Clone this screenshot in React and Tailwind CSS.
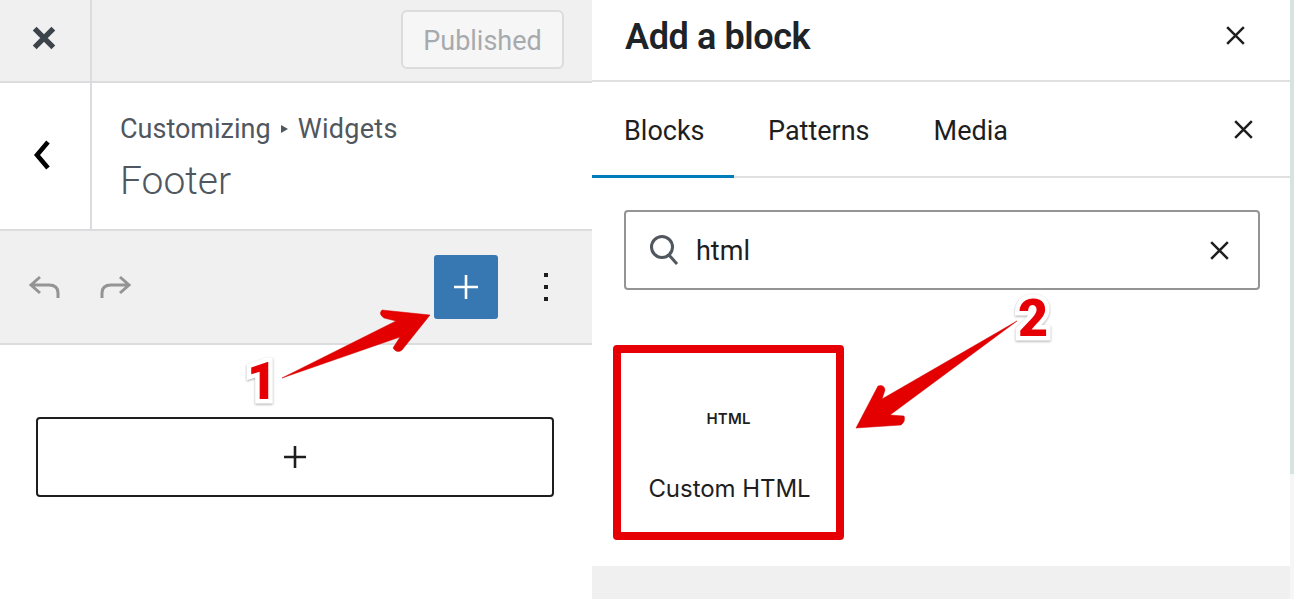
import React from 'react';

const XIcon = ({ className, width = 2.4 }) => (
  <svg className={className} viewBox="0 0 24 24" fill="none" stroke="currentColor" strokeWidth={width}>
    <path d="M4 4l16 16M20 4L4 20" />
  </svg>
);

// left column: customizer sidebar
const Sidebar = () => (
  <div className="w-[592px] shrink-0 flex flex-col h-full bg-white">
    <div className="h-[83px] flex bg-[#f0f0f1] border-b-2 border-[#dcdcde]">
      <div className="w-[92px] flex items-center justify-center border-r-2 border-[#dcdcde] text-[#3c434a]">
        <XIcon className="w-[28px] h-[28px] mr-[3px] mt-[-6px]" width={4.6} />
      </div>
      <div className="flex-1 flex justify-end pr-[28px] pt-[10px]">
        <div className="w-[163px] h-[59px] flex items-center justify-center rounded-[6px] border-2 border-[#dcdcde] bg-[#f6f6f6] text-[27px] text-[#a7aaad] pt-[3px]">
          Published
        </div>
      </div>
    </div>
    <div className="h-[148px] flex border-b-2 border-[#dcdcde]">
      <div className="w-[92px] flex items-center justify-center border-r-2 border-[#dcdcde]">
        <svg className="w-[18px] h-[30px] mr-[7px] mt-[-2px]" viewBox="0 0 18 30" fill="none" stroke="#000" strokeWidth="4.6">
          <path d="M15 2L4 15l11 13" />
        </svg>
      </div>
      <div className="pl-[28px] pt-[28px] text-[#50575e]">
        <div className="text-[27px] leading-[36px] flex items-center">
          Customizing
          <span className="ml-[10px] mr-[10px] w-0 h-0 border-y-[4px] border-y-transparent border-l-[7px] border-l-[#50575e]"></span>
          <span className="tracking-[0.3px]">Widgets</span>
        </div>
        <div className="text-[39px] leading-[52px] mt-[8px] font-light">Footer</div>
      </div>
    </div>
    <div className="h-[114px] flex items-center bg-[#f0f0f1] border-b-2 border-[#dcdcde] pl-[28px] pb-[1px]">
      <svg className="w-[32px] h-[26px]" viewBox="0 0 32 26" fill="none" stroke="#949494" strokeWidth="3">
        <path d="M12 3L3 11l9 8M3 11h18c6 0 9 3 9 8v5" />
      </svg>
      <svg className="w-[32px] h-[26px] ml-[40px]" viewBox="0 0 32 26" fill="none" stroke="#949494" strokeWidth="3">
        <path d="M20 3l9 8-9 8M29 11H11c-6 0-9 3-9 8v5" />
      </svg>
      <div className="w-[64px] h-[64px] ml-auto rounded-[3px] bg-[#3778b3] flex items-center justify-center">
        <svg className="w-[24px] h-[24px]" viewBox="0 0 24 24" fill="none" stroke="#fff" strokeWidth="2.6">
          <path d="M12 0v24M0 12h24" />
        </svg>
      </div>
      <div className="w-[94px] flex flex-col items-center gap-[8px] pl-[2px]">
        <span className="w-[4px] h-[4px] bg-[#1e1e1e]"></span>
        <span className="w-[4px] h-[4px] bg-[#1e1e1e]"></span>
        <span className="w-[4px] h-[4px] bg-[#1e1e1e]"></span>
      </div>
    </div>
    <div className="px-[36px] pr-[38px] pt-[72px]">
      <div className="h-[80px] rounded-[4px] border-2 border-[#1e1e1e] flex items-center justify-center">
        <svg className="w-[24px] h-[24px]" viewBox="0 0 24 24" fill="none" stroke="#1e1e1e" strokeWidth="2.6">
          <path d="M12 1v22M1 12h22" />
        </svg>
      </div>
    </div>
  </div>
);

// right column: block inserter
const Inserter = () => (
  <div className="flex-1 h-full flex flex-col bg-[#f0f0f0]">
    <div className="h-[566px] bg-white text-[#1e1e1e]">
      <div className="h-[82px] flex items-center justify-between border-b-2 border-[#e0e0e0] pl-[33px] pr-[42px]">
        <span className="text-[36px] font-semibold text-[#1d2327] tracking-[-0.4px] mt-[-6px]">Add a block</span>
        <XIcon className="w-[25px] h-[25px] mt-[-9px]" />
      </div>
      <div className="h-[96px] flex border-b-2 border-[#e0e0e0] text-[27px] relative">
        <div className="w-[142px] pl-[32px] pt-[29px] border-b-[3px] border-[#007cba] h-[96px]">Blocks</div>
        <div className="ml-[34px] pt-[29px]">Patterns</div>
        <div className="ml-[64px] pt-[29px]">Media</div>
        <XIcon className="w-[25px] h-[25px] ml-auto mr-[34px] mt-[35px]" />
      </div>
      <div className="pl-[32px] pr-[30px] pt-[32px]">
        <div className="h-[80px] rounded-[4px] border-2 border-[#949494] flex items-center pl-[22px] pr-[26px]">
          <svg className="w-[32px] h-[32px] text-[#50575e]" viewBox="0 0 32 32" fill="none" stroke="currentColor" strokeWidth="3">
            <circle cx="14" cy="13" r="10.5" />
            <path d="M21 21l8 9" />
          </svg>
          <span className="text-[27px] ml-[16px] pt-[3px]">html</span>
          <XIcon className="w-[25px] h-[25px] ml-auto" />
        </div>
      </div>
      <div className="pl-[21px] pt-[55px]">
        <div className="w-[231px] h-[195px] rounded-[4px] border-[8px] border-[#e60005] flex flex-col items-center font-['Inter',sans-serif]">
          <span className="text-[15px] font-semibold mt-[55px] leading-[22px] tracking-[0.2px]">HTML</span>
          <span className="text-[24px] leading-[32px] mt-[43px] ml-[2px] tracking-[-0.05px]">Custom HTML</span>
        </div>
      </div>
    </div>
  </div>
);

const Badge = ({ className, children }) => (
  <span className={`absolute text-[#e60005] font-black text-[52px] leading-[44px] [paint-order:stroke_fill] [-webkit-text-stroke:9px_#fff] [filter:drop-shadow(0_1px_1px_#aaa)] ${className}`}>
    {children}
  </span>
);

export default function App() {
  return (
    <div className="relative w-[1294px] h-[599px] overflow-hidden flex bg-white font-['Roboto','Liberation_Sans',sans-serif]">
      <Sidebar />
      <Inserter />
      <div className="w-[4px] h-full flex flex-col bg-[#f6f6f6]">
        <div className="h-[474px] bg-[#d5e4de]"></div>
      </div>

      {/* annotations over the screenshot */}
      <svg className="absolute left-0 top-0 w-[1294px] h-[599px] pointer-events-none" viewBox="0 0 1294 599">
        <defs>
          <linearGradient id="red" x1="0" y1="0" x2="1" y2="1">
            <stop offset="0" stopColor="#f00000" />
            <stop offset="1" stopColor="#d80000" />
          </linearGradient>
        </defs>
        <path d="M282 378L396 321L384 318Q378 314 382 310L430 315L402 350Q397 354 393 348L400 337Z" fill="url(#red)" stroke="#d00000" strokeWidth="0.5" strokeLinejoin="round" />
        <path d="M1017 321L882 399L885 390Q884 384 878 386L856 428L901 425Q906 421 904 416L890 415Z" fill="url(#red)" stroke="#d00000" strokeWidth="0.5" strokeLinejoin="round" />
      </svg>
      <Badge className="left-[247px] top-[360px]">1</Badge>
      <Badge className="left-[1018px] top-[297px]">2</Badge>
    </div>
  );
}
